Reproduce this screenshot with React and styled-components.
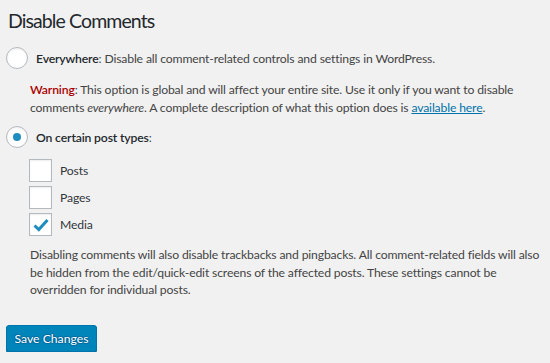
import React, { useState } from 'react'
import styled, { createGlobalStyle } from 'styled-components'

const GlobalStyle = createGlobalStyle`
  html, body {
    margin: 0;
    padding: 0;
    background: #f1f1f1;
  }
  body {
    font-family: Lato, "Open Sans", sans-serif;
    font-size: 12.2px;
    letter-spacing: -0.15px;
    color: #444;
  }
`

const Page = styled.div`
  padding: 6px 0 0 6px;
`

const Title = styled.h1`
  margin: 0 0 0 2px;
  font-size: 19.5px;
  letter-spacing: -0.9px;
  font-weight: 400;
  line-height: 29px;
  color: #23282d;
`

const Option = styled.label`
  display: flex;
  align-items: center;
  gap: 8px;
  height: 22px;
  margin-top: ${({ top }) => top}px;
  cursor: pointer;
`

const Radio = styled.span`
  width: 22px;
  height: 22px;
  box-sizing: border-box;
  border-radius: 50%;
  border: 1px solid #b4b9be;
  background: #fff;
  box-shadow: inset 0 1px 2px rgba(0, 0, 0, 0.07);
  display: flex;
  align-items: center;
  justify-content: center;
  flex-shrink: 0;
  &::after {
    content: '';
    width: 8px;
    height: 8px;
    border-radius: 50%;
    background: ${({ checked }) => (checked ? '#1e8cbe' : 'transparent')};
  }
`

const OptionText = styled.span`
  color: #444;
  strong {
    font-weight: 600;
    color: #23282d;
  }
`

const Note = styled.p`
  margin: ${({ top }) => top}px 0 0 24px;
  line-height: 17.5px;
  max-width: 518px;
  .red {
    color: #a00;
    font-weight: 600;
  }
  a {
    color: #0073aa;
    text-decoration: underline;
  }
`

const TypeList = styled.ul`
  list-style: none;
  margin: 11px 0 0 23px;
  padding: 0;
  display: flex;
  flex-direction: column;
  gap: 4px;
`

const TypeItem = styled.li`
  display: flex;
  align-items: center;
  gap: 8px;
  height: 23px;
  color: #32373c;
  cursor: pointer;
`

const Box = styled.span`
  width: 23px;
  height: 23px;
  box-sizing: border-box;
  border: 1px solid #b4b9be;
  background: #fff;
  box-shadow: inset 0 1px 2px rgba(0, 0, 0, 0.07);
  display: flex;
  align-items: center;
  justify-content: center;
`

const SaveButton = styled.button`
  margin-top: 26px;
  height: 27px;
  width: 91px;
  padding: 0;
  font-family: inherit;
  font-size: 12.2px;
  color: #fff;
  background: #0085ba;
  border: 1px solid #0073aa;
  border-radius: 3px;
  box-shadow: 0 1px 0 #006799;
  text-shadow: 0 -1px 1px #006799, 1px 0 1px #006799, 0 1px 1px #006799,
    -1px 0 1px #006799;
  cursor: pointer;
`

const Check = () => (
  <svg width="16" height="14" viewBox="0 0 16 14">
    <path d="M1.5 7.5 L5.8 11.5 L14.5 2" fill="none" stroke="#1e8cbe" strokeWidth="3" />
  </svg>
)

const types = ['Posts', 'Pages', 'Media']

const App = () => {
  const [mode, setMode] = useState('certain')
  const [checked, setChecked] = useState({ Media: true })

  return (
    <Page>
      <GlobalStyle />
      <Title>Disable Comments</Title>
      <Option top={12} onClick={() => setMode('everywhere')}>
        <Radio checked={mode === 'everywhere'} />
        <OptionText>
          <strong>Everywhere</strong>: Disable all comment-related controls and settings in
          WordPress.
        </OptionText>
      </Option>
      <Note top={12}>
        <span className="red">Warning</span>: This option is global and will affect your entire
        site. Use it only if you want to disable comments <em>everywhere</em>. A complete
        description of what this option does is <a href="#">available here</a>.
      </Note>
      <Option top={10} onClick={() => setMode('certain')}>
        <Radio checked={mode === 'certain'} />
        <OptionText>
          <strong>On certain post types</strong>:
        </OptionText>
      </Option>
      <TypeList>
        {types.map((t) => (
          <TypeItem key={t} onClick={() => setChecked({ ...checked, [t]: !checked[t] })}>
            <Box>{checked[t] && <Check />}</Box>
            {t}
          </TypeItem>
        ))}
      </TypeList>
      <Note top={10}>
        Disabling comments will also disable trackbacks and pingbacks. All comment-related fields
        will also be hidden from the edit/quick-edit screens of the affected posts. These settings
        cannot be overridden for individual posts.
      </Note>
      <SaveButton>Save Changes</SaveButton>
    </Page>
  )
}

export default App
